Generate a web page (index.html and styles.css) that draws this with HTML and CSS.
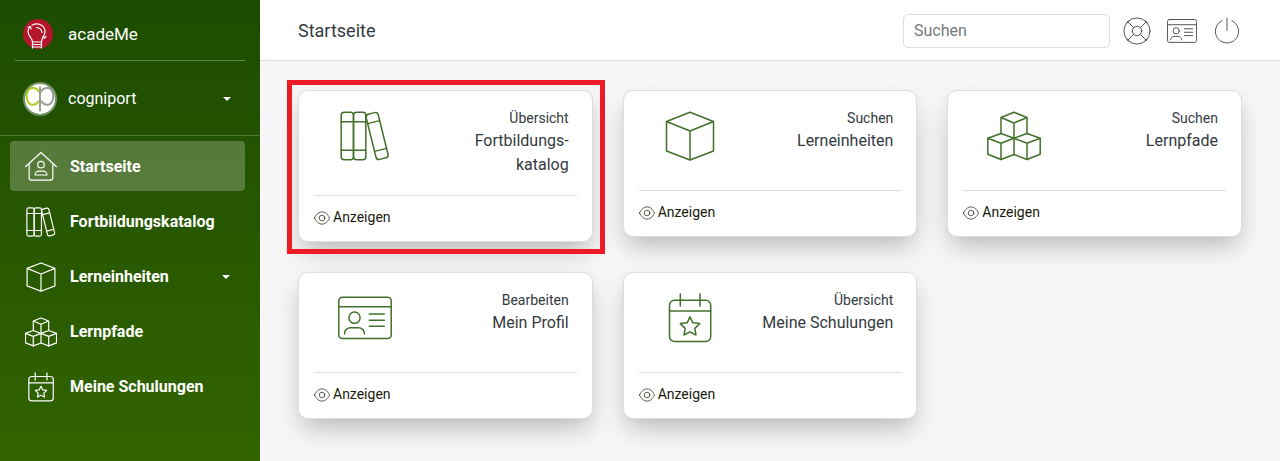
FILE: index.html
```html
<!DOCTYPE html>
<html lang="de">
<head>
    <meta charset="UTF-8" />
    <meta name="viewport" content="width=device-width, initial-scale=1.0" />
    <title>acadeMe - Startseite</title>
    <link rel="stylesheet" href="styles.css">
</head>
<body>

<!-- Icon set -->
<svg class="sprite" aria-hidden="true">
    <symbol id="icon-home" viewBox="0 0 54 54">
        <path d="M.8 26.5 27 2.5l26.2 24M7 21.5V45a4 4 0 0 0 4 4h32a4 4 0 0 0 4-4V21.5" />
        <circle cx="27" cy="23" r="5.5" />
        <path d="M17 40.5c0-4 3-6.5 6-6.5h8c3 0 6 2.5 6 6.5z" />
    </symbol>
    <symbol id="icon-books" viewBox="0 0 54 54">
        <rect x="3.2" y="3.3" width="12.3" height="47.5" rx="3" />
        <rect x="15.5" y="3.3" width="12.3" height="47.5" rx="3" />
        <path d="M3.2 12.7h24.6M3.2 41.3h24.6" />
        <g transform="rotate(-14 39.1 27)">
            <rect x="32.9" y="3.7" width="12.4" height="46.6" rx="3" />
            <path d="M32.9 12.7h12.4M32.9 41.3h12.4" />
        </g>
    </symbol>
    <symbol id="icon-cube" viewBox="0 0 54 54">
        <path d="M27 3.3 50.5 12.5V42L27 51 3.5 42V12.5zM3.5 12.5 27 22l23.5-9.5M27 22v29" />
    </symbol>
    <symbol id="icon-cubes" viewBox="0 0 54 54">
        <path d="M14 24.5v-16L27 3.3l13 5.2v16M14 8.5l13 5.5 13-5.5M27 14v31.5" />
        <path d="M27 29.3 14 24.5.8 29.3v16L14 50.5l13-5 13 5 13.2-5.2v-16L40 24.5z" />
        <path d="M.8 29.3 14 34.3l13-5 13 5 13.2-5M14 34.3v16.2M40 34.3v16.2" />
    </symbol>
    <symbol id="icon-card" viewBox="0 0 54 54">
        <rect x=".8" y="6.3" width="52.4" height="41.2" rx="3.5" />
        <path d="M.8 15.7h52.4M31.3 23h15M31.3 29.3h15M31.3 35.3h15" />
        <circle cx="16.5" cy="26.7" r="5.6" />
        <path d="M6.5 43c0-4 3-6.3 6-6.3h8c3 0 6 2.3 6 6.3" />
    </symbol>
    <symbol id="icon-calendar" viewBox="0 0 54 54">
        <rect x="6.5" y="9.3" width="41.2" height="41.2" rx="5" />
        <path d="M6.5 20h41.2M17.3 3v12M37 3v12" />
        <path d="m27 25.8 2.9 6 6.8.8-4.9 4.8L33 44l-6-3.2-6 3.2 1.2-6.6-4.9-4.8 6.8-.8z" />
    </symbol>
    <symbol id="icon-help" viewBox="0 0 54 54">
        <circle cx="27" cy="27" r="23.5" />
        <circle cx="27" cy="27" r="8.5" />
        <path d="m10 10 11 11M44 10 33 21M10 44l11-11M44 44 33 33" />
        <path d="M8 13l5-5M41 8l5 5M8 41l5 5M41 46l5-5" />
    </symbol>
    <symbol id="icon-power" viewBox="0 0 54 54">
        <path d="M27 4v22M18 8.5a21 21 0 1 0 18 0" />
    </symbol>
    <symbol id="icon-eye" viewBox="0 0 16 16">
        <path d="M.5 8C4-.2 12-.2 15.5 8 12 16.2 4 16.2.5 8z" />
        <circle cx="8" cy="8" r="2.8" />
    </symbol>
</svg>

<div class="layout">
    <nav class="sidebar">
        <a class="brand" href="#">
            <svg class="brand-logo" viewBox="0 0 30 30" aria-hidden="true">
                <circle class="logo-disc" cx="15" cy="15" r="15" />
                <path d="M9.5 23c0-4-4.5-5.500-4.5-10.500 0-2 .8-3.500 2-4.700M9 6.200C14.500 3 22 6 22 12.500c0 5-3.500 6.500-3.500 10.500" />
                <path d="M9.5 23h9M9.5 25.5h9M9.5 28h9M9.5 23v6M18.500 23v6M13.500 8.500c3 .2 5 2 5.500 5M5 8l2.500-.5.5 2.500M20 17.500l1.500 1.500 1.500-1.500" />
            </svg>
            <span>acadeMe</span>
        </a>
        <button class="client" type="button">
            <svg class="client-logo" viewBox="0 0 34 34" aria-hidden="true">
                <circle class="client-disc" cx="17" cy="17" r="16" />
                <path class="client-left" d="M16 9.5C13.500 5.500 9 4.500 5.500 8 2.500 12 3.500 21 8 22.500c3 .8 6-.5 8-3.500" />
                <path class="client-right" d="M17 5.500v23M18 9.500c2.500-4 7-5 10.500-1.500 3 4 2 13-2.500 14.500-3 .8-6-.5-8-3.500" />
            </svg>
            <span>cogniport</span>
            <i class="caret"></i>
        </button>
        <ul class="menu">
            <li><a class="menu-link active" href="#"><svg class="icon"><use href="#icon-home" /></svg><span>Startseite</span></a></li>
            <li><a class="menu-link" href="#"><svg class="icon"><use href="#icon-books" /></svg><span>Fortbildungskatalog</span></a></li>
            <li><a class="menu-link" href="#"><svg class="icon"><use href="#icon-cube" /></svg><span>Lerneinheiten</span><i class="caret"></i></a></li>
            <li><a class="menu-link" href="#"><svg class="icon"><use href="#icon-cubes" /></svg><span>Lernpfade</span></a></li>
            <li><a class="menu-link" href="#"><svg class="icon"><use href="#icon-calendar" /></svg><span>Meine Schulungen</span></a></li>
        </ul>
    </nav>

    <div class="page">
        <header class="topbar">
            <h1 class="page-title">Startseite</h1>
            <input class="search" type="search" placeholder="Suchen" aria-label="Suchen" />
            <a class="tool" href="#" aria-label="Hilfe"><svg class="icon"><use href="#icon-help" /></svg></a>
            <a class="tool" href="#" aria-label="Profil"><svg class="icon"><use href="#icon-card" /></svg></a>
            <a class="tool" href="#" aria-label="Abmelden"><svg class="icon"><use href="#icon-power" /></svg></a>
        </header>

        <main class="cards">
            <section class="card highlight">
                <div class="card-body">
                    <div class="card-icon"><svg class="icon"><use href="#icon-books" /></svg></div>
                    <div class="card-text">
                        <p class="card-category">Übersicht</p>
                        <h2 class="card-title">Fortbildungs-<br>katalog</h2>
                    </div>
                </div>
                <div class="card-footer"><a class="card-link" href="#"><svg class="icon"><use href="#icon-eye" /></svg>Anzeigen</a></div>
            </section>
            <section class="card">
                <div class="card-body">
                    <div class="card-icon"><svg class="icon"><use href="#icon-cube" /></svg></div>
                    <div class="card-text">
                        <p class="card-category">Suchen</p>
                        <h2 class="card-title">Lerneinheiten</h2>
                    </div>
                </div>
                <div class="card-footer"><a class="card-link" href="#"><svg class="icon"><use href="#icon-eye" /></svg>Anzeigen</a></div>
            </section>
            <section class="card">
                <div class="card-body">
                    <div class="card-icon"><svg class="icon"><use href="#icon-cubes" /></svg></div>
                    <div class="card-text">
                        <p class="card-category">Suchen</p>
                        <h2 class="card-title">Lernpfade</h2>
                    </div>
                </div>
                <div class="card-footer"><a class="card-link" href="#"><svg class="icon"><use href="#icon-eye" /></svg>Anzeigen</a></div>
            </section>
            <section class="card">
                <div class="card-body">
                    <div class="card-icon"><svg class="icon"><use href="#icon-card" /></svg></div>
                    <div class="card-text">
                        <p class="card-category">Bearbeiten</p>
                        <h2 class="card-title">Mein Profil</h2>
                    </div>
                </div>
                <div class="card-footer"><a class="card-link" href="#"><svg class="icon"><use href="#icon-eye" /></svg>Anzeigen</a></div>
            </section>
            <section class="card">
                <div class="card-body">
                    <div class="card-icon"><svg class="icon"><use href="#icon-calendar" /></svg></div>
                    <div class="card-text">
                        <p class="card-category">Übersicht</p>
                        <h2 class="card-title">Meine Schulungen</h2>
                    </div>
                </div>
                <div class="card-footer"><a class="card-link" href="#"><svg class="icon"><use href="#icon-eye" /></svg>Anzeigen</a></div>
            </section>
        </main>
    </div>
</div>

</body>
</html>
```
FILE: styles.css
```css
* {
    box-sizing: border-box;
}

body {
    margin: 0;
    font-family: Roboto, "Liberation Sans", sans-serif;
    font-size: 16px;
    line-height: 24px;
    color: #343a40;
    background: #f6f6f6;
}

a {
    color: inherit;
    text-decoration: none;
}

.sprite {
    display: none;
}

svg {
    flex: none;
    fill: none;
    stroke: currentColor;
    stroke-linecap: round;
    stroke-linejoin: round;
}

.layout {
    display: flex;
    min-height: 100vh;
}

/* Sidebar */
.sidebar {
    width: 260px;
    flex: none;
    color: #fff;
    background: linear-gradient(to bottom, #1c4c00, #326300);
}
.brand {
    display: flex;
    align-items: center;
    gap: 15px;
    height: 61px;
    margin: 0 15px;
    padding: 7px 8px 0;
    border-bottom: 1px solid rgba(255, 255, 255, 0.3);
    font-size: 17px;
}
.brand-logo {
    width: 30px;
    height: 30px;
    stroke-width: 1.2;
}
.logo-disc {
    fill: #b5152b;
    stroke: none;
}
.client {
    display: flex;
    align-items: center;
    gap: 11px;
    width: 100%;
    height: 75px;
    padding: 2px 29px 0 23px;
    border: none;
    border-bottom: 1px solid rgba(255, 255, 255, 0.2);
    background: none;
    color: #fff;
    font: inherit;
}
.client-logo {
    width: 34px;
    height: 34px;
    stroke-width: 2;
}
.client-disc {
    fill: #fff;
    stroke: #6f9168;
}
.client-left {
    stroke: #b5c920;
}
.client-right {
    stroke: #9c9c96;
}
.caret {
    margin-left: auto;
    border: 4px solid transparent;
    border-top-color: #fff;
    border-bottom: none;
}
.menu {
    display: flex;
    flex-direction: column;
    gap: 5px;
    margin: 0;
    padding: 5px 15px 5px 10px;
    list-style: none;
}
.menu-link {
    display: flex;
    align-items: center;
    gap: 13px;
    height: 50px;
    padding: 1px 15px 0;
    border-radius: 4px;
    font-weight: 700;
}
.menu-link.active {
    background: rgba(255, 255, 255, 0.23);
}
.menu-link .icon {
    width: 32px;
    height: 32px;
    stroke-width: 2;
}

/* Top bar */
.page {
    flex: 1;
    min-width: 0;
}
.topbar {
    display: flex;
    align-items: center;
    height: 61px;
    padding: 1px 38px 0;
    background: #fff;
    border-bottom: 1px solid #ddd;
}
.page-title {
    margin: 0 auto 0 0;
    font-size: 18px;
    font-weight: 400;
}
.search {
    width: 207px;
    height: 34px;
    margin-right: 12px;
    padding: 0 10px;
    border: 1px solid #ddd;
    border-radius: 5px;
    background: #fff;
    font: inherit;
}
.search::placeholder {
    color: #75797c;
}
.tool {
    display: flex;
    color: #555;
}
.tool + .tool {
    margin-left: 15px;
}
.tool .icon {
    width: 30px;
    height: 30px;
    stroke-width: 1.8;
}

/* Cards */
.cards {
    display: grid;
    grid-template-columns: repeat(3, 1fr);
    align-items: start;
    gap: 30px;
    padding: 29px 38px;
}
.card {
    position: relative;
    background: #fff;
    border: 1px solid #ddd;
    border-radius: 10px;
    box-shadow: 0 12px 24px -4px rgba(0, 0, 0, 0.25);
}
.card-body {
    display: flex;
    min-height: 99px;
    padding: 17px 23px 18px 0;
}
.card-icon {
    display: flex;
    flex: 0 0 49%;
    align-items: center;
    justify-content: center;
    height: 56px;
    color: #41702b;
}
.card-icon .icon {
    width: 54px;
    height: 54px;
    stroke-width: 1.5;
}
.card-text {
    flex: 1;
    text-align: right;
}
.card-category {
    margin: 0;
    font-size: 14px;
    line-height: 21px;
}
.card-title {
    margin: 0;
    font-size: 16px;
    font-weight: 400;
}
.card-footer {
    margin: 0 15px;
    padding: 11px 0 13px;
    border-top: 1px solid #ddd;
}
.card-link {
    display: flex;
    align-items: center;
    gap: 3px;
    color: #1a1a0c;
    font-size: 14px;
    line-height: 21px;
}
.card-link .icon {
    width: 16px;
    height: 16px;
    stroke-width: 0.7;
}
.highlight::after {
    content: "";
    position: absolute;
    inset: -11px -13px -13px -12px;
    border: 5px solid #ed1c24;
    z-index: 1;
    pointer-events: none;
}
```
